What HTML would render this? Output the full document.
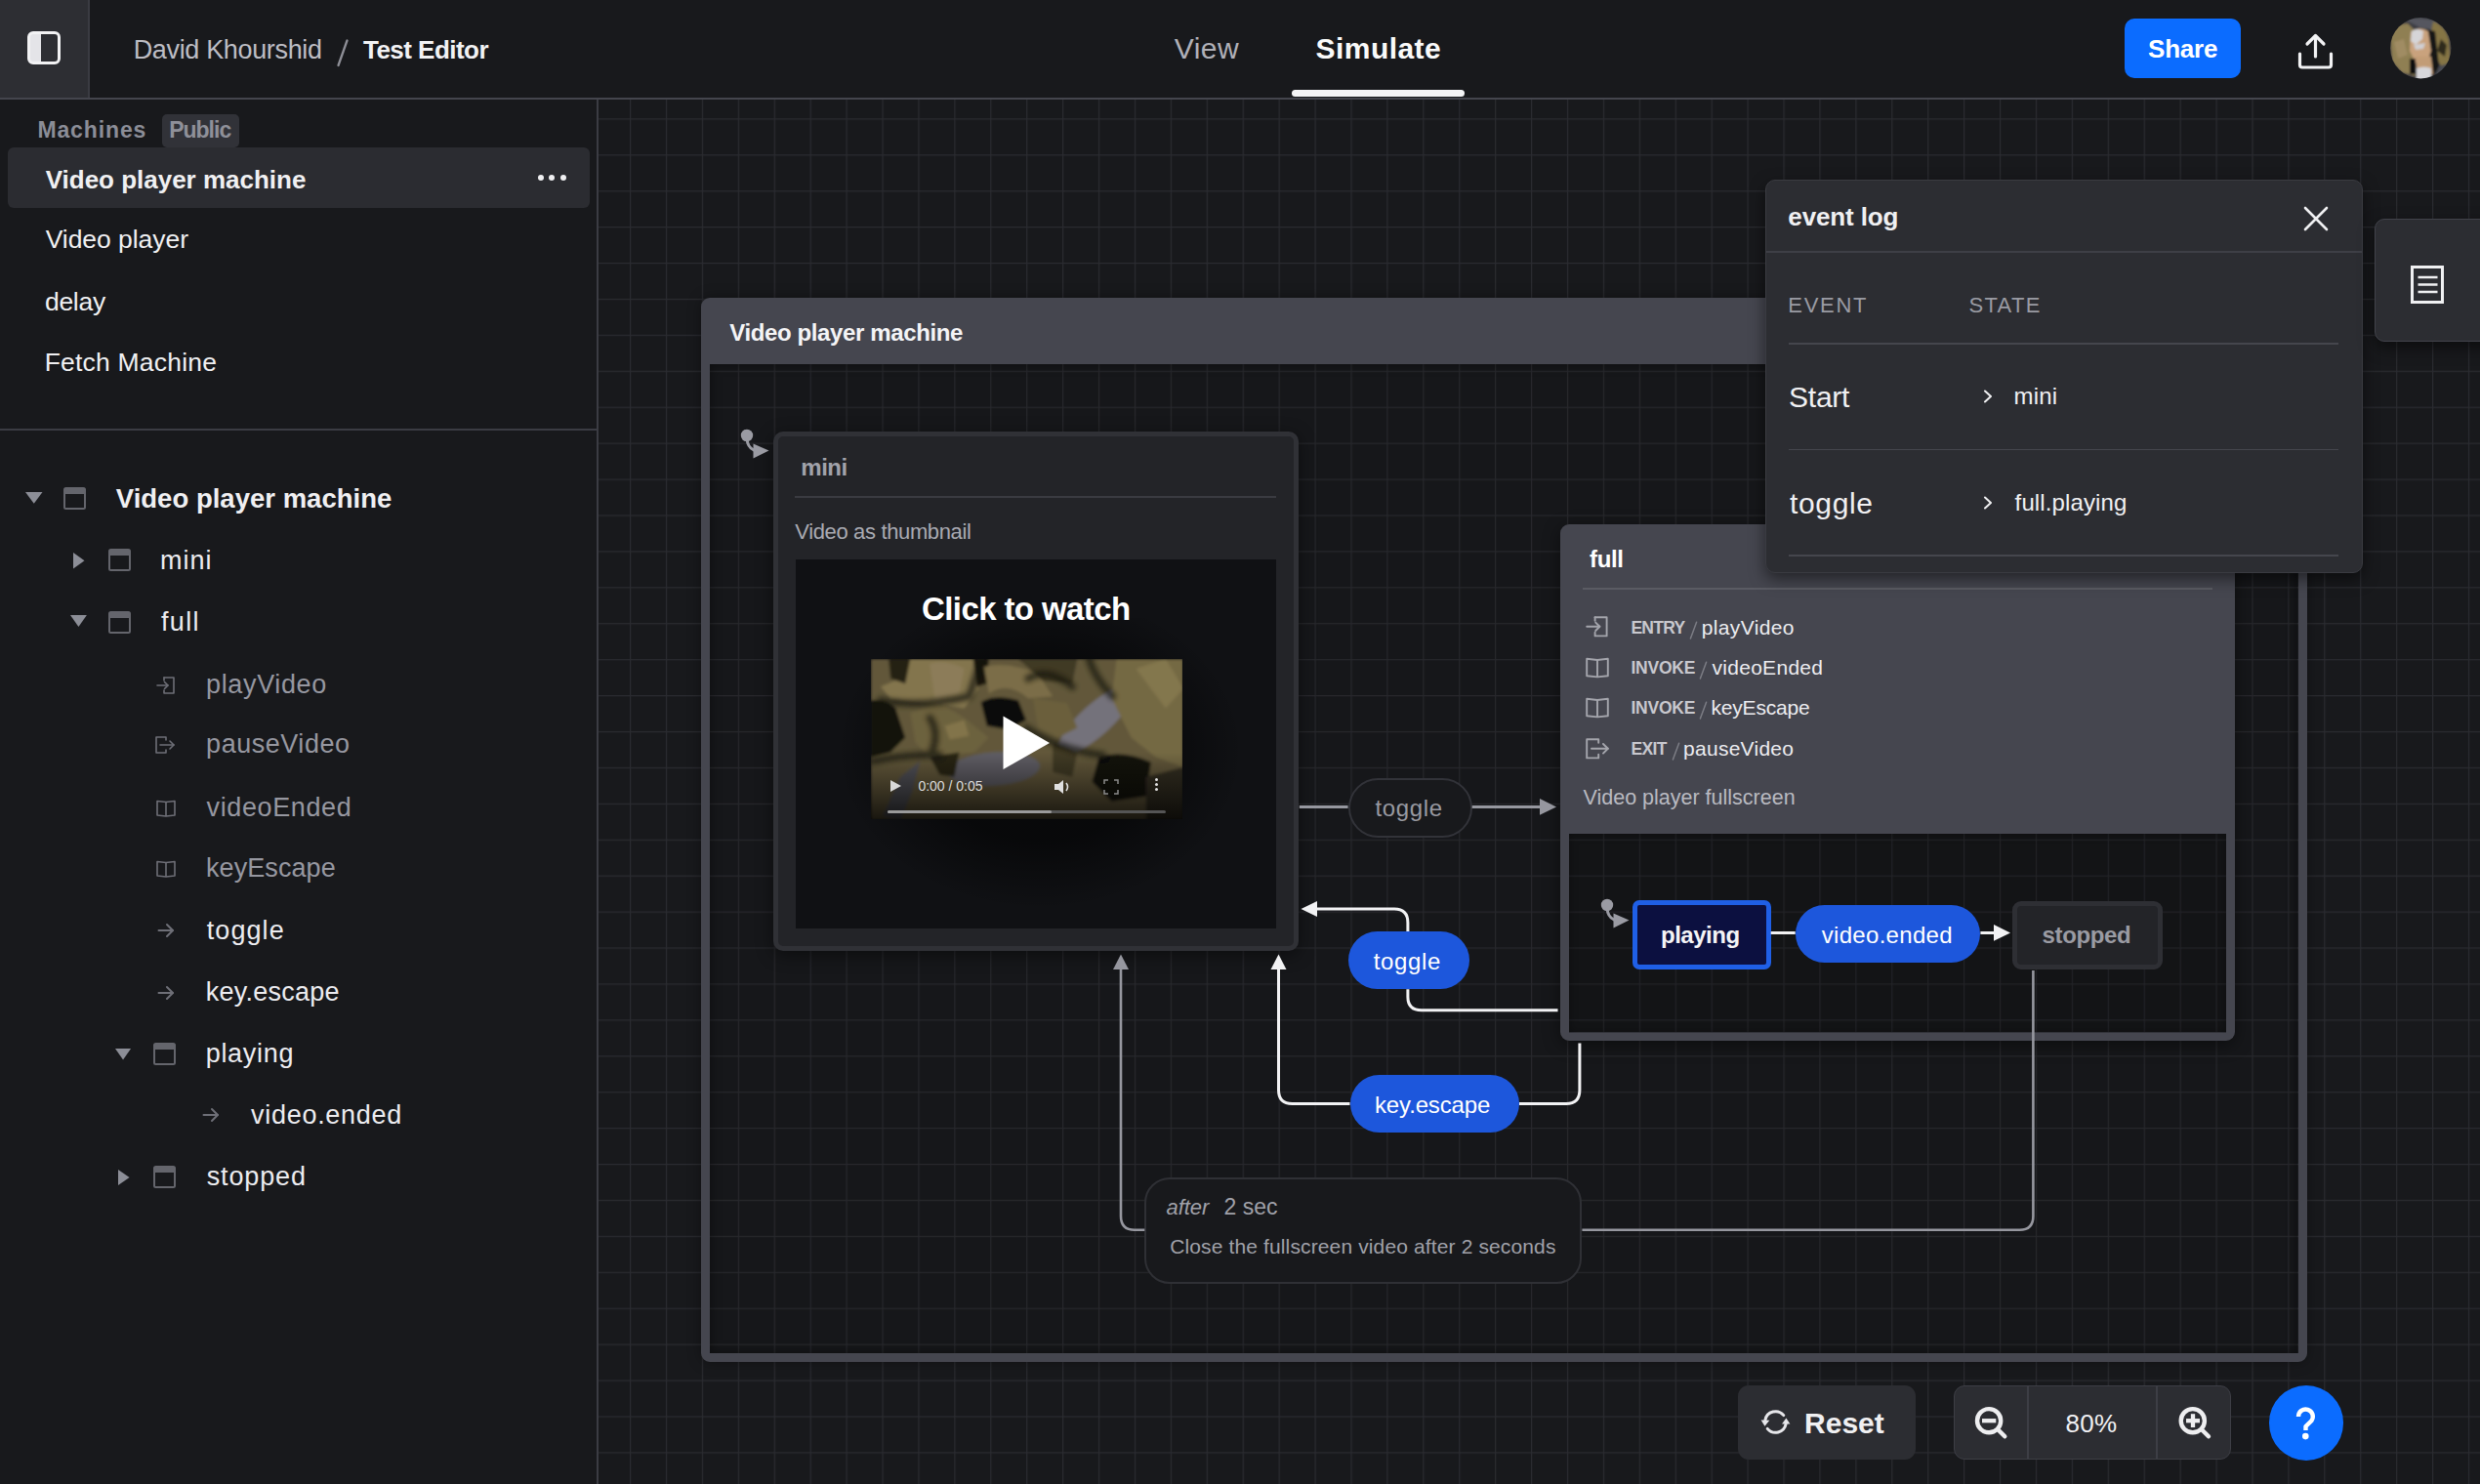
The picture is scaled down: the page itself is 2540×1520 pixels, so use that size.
<!DOCTYPE html>
<html><head><meta charset="utf-8">
<style>
*{box-sizing:border-box;margin:0;padding:0}
html,body{width:2540px;height:1520px;overflow:hidden;background:#18191c;font-family:"Liberation Sans",sans-serif;color:#f0f0f2;position:relative}
.a{position:absolute;white-space:nowrap;line-height:1}
svg{position:absolute;overflow:visible}
</style></head>
<body>
<svg width="2540" height="1520" style="position:absolute;left:0;top:0">
<defs><pattern id="g" patternUnits="userSpaceOnUse" x="645" y="121.3" width="36.92" height="36.92">
<rect x="0" y="0" width="1.2" height="36.92" fill="#2a2b30"/><rect x="0" y="0" width="36.92" height="1.2" fill="#2a2b30"/></pattern></defs>
<rect x="613" y="102" width="1927" height="1418" fill="url(#g)"/>
</svg>
<div class="a" style="left:0;top:0;width:2540px;height:100px;background:#18191c"></div>
<div class="a" style="left:0;top:100px;width:2540px;height:2px;background:#44454d"></div>
<div class="a" style="left:0;top:0;width:92px;height:100px;background:#2d2e33;border-right:2px solid #3a3b42"></div>
<div class="a" style="left:28px;top:32.3px;width:34px;height:34px;border:3.3px solid #f2f2f4;border-radius:6px;background:linear-gradient(90deg,#e4e4e8 0 10.6px,transparent 10.6px)"></div>
<div class="a" style="left:136.70px;top:37.70px;font-size:27px;font-weight:normal;font-style:normal;color:#bdbdc4;letter-spacing:-0.342px;">David Khourshid</div>
<svg width="20" height="40" style="left:340px;top:35px"><path d="M15.5 6.5 L6.5 32" stroke="#8e8f97" stroke-width="2.3" stroke-linecap="round"/></svg>
<div class="a" style="left:372.00px;top:38.20px;font-size:26px;font-weight:bold;font-style:normal;color:#f2f2f4;letter-spacing:-0.534px;">Test Editor</div>
<div class="a" style="left:1202.80px;top:35.00px;font-size:30px;font-weight:normal;font-style:normal;color:#b0b0b8;letter-spacing:0.461px;">View</div>
<div class="a" style="left:1347.60px;top:35.00px;font-size:30px;font-weight:bold;font-style:normal;color:#fafafa;letter-spacing:0.435px;">Simulate</div>
<div class="a" style="left:1323px;top:92px;width:177px;height:7px;border-radius:4px;background:#f4f4f6"></div>
<div class="a" style="left:2176px;top:19px;width:119px;height:61px;border-radius:10px;background:#0b6cff"></div>
<div class="a" style="left:2200.00px;top:37.40px;font-size:26px;font-weight:bold;font-style:normal;color:#ffffff;letter-spacing:-0.200px;">Share</div>
<svg width="40" height="40" style="left:2352px;top:33px"><g fill="none" stroke="#f2f2f4" stroke-width="3.2" stroke-linecap="round" stroke-linejoin="round">
<path d="M19.5 4 V25"/><path d="M11 12 L19.5 3.5 L28 12"/><path d="M3.5 22 V33.5 Q3.5 36 6 36 H33 Q35.5 36 35.5 33.5 V22"/></g></svg>
<svg width="63" height="63" style="left:2447.7px;top:18.2px"><defs><clipPath id="avc"><circle cx="31.25" cy="31.25" r="31.2"/></clipPath><filter id="avb"><feGaussianBlur stdDeviation="0.9"/></filter></defs>
<g clip-path="url(#avc)"><g filter="url(#avb)">
<rect x="-2" y="-2" width="67" height="67" fill="#3a3b42"/>
<path d="M15 2 Q30 -2 48 4 L50 14 L30 10 Z" fill="#55565e"/>
<path d="M0 18 Q6 6 18 6 L26 14 L24 40 L26 60 L12 56 L2 45 Z" fill="#8f7f52"/>
<path d="M4 25 L14 22 L18 38 L8 42 Z" fill="#a08c63"/>
<path d="M44 4 Q56 8 60 22 L62 48 L54 52 L46 40 L42 14 Z" fill="#857545"/>
<path d="M52 22 L58 28 L56 40 L48 34 Z" fill="#2e2a1c"/>
<path d="M36 12 L46 14 L50 50 L44 60 L38 48 Z" fill="#121213"/>
<path d="M21 15 Q30 8 39 14 L42 34 L38 46 L26 46 L20 34 Z" fill="#c9a27d"/>
<path d="M22 14 Q28 10 34 14 L33 22 L26 28 L21 24 Z" fill="#d6d5d8"/>
<path d="M24 28 L36 26 L34 32 L26 33 Z" fill="#d0cfd2"/>
<path d="M26 40 L42 40 L44 58 L28 60 Z" fill="#c29c76"/>
<path d="M20 42 L26 42 L26 58 L20 58 Z" fill="#0e0e10"/>
<path d="M27 52 Q35 49 42 52 L42 64 L27 64 Z" fill="#d8d8dc"/>
<path d="M50 50 L62 46 L62 64 L46 64 Z" fill="#4a4b53"/>
</g></g></svg>
<div class="a" style="left:611px;top:102px;width:2px;height:1418px;background:#3b3c43"></div>
<div class="a" style="left:38.40px;top:122.40px;font-size:23px;font-weight:bold;font-style:normal;color:#8b8d97;letter-spacing:0.883px;">Machines</div>
<div class="a" style="left:166px;top:116.5px;width:79px;height:34px;border-radius:5px;background:#313238"></div>
<div class="a" style="left:173.20px;top:122.40px;font-size:23px;font-weight:bold;font-style:normal;color:#8f9099;letter-spacing:-1.004px;">Public</div>
<div class="a" style="left:8px;top:151.4px;width:596px;height:61.2px;border-radius:6px;background:#2b2c31"></div>
<div class="a" style="left:46.70px;top:170.60px;font-size:26px;font-weight:bold;font-style:normal;color:#f0f0f2;letter-spacing:-0.010px;">Video player machine</div>
<div class="a" style="left:550.5px;top:178.5px;width:6px;height:6px;border-radius:50%;background:#f0f0f2"></div>
<div class="a" style="left:562px;top:178.5px;width:6px;height:6px;border-radius:50%;background:#f0f0f2"></div>
<div class="a" style="left:573.5px;top:178.5px;width:6px;height:6px;border-radius:50%;background:#f0f0f2"></div>
<div class="a" style="left:46.70px;top:231.95px;font-size:26.5px;font-weight:normal;font-style:normal;color:#f0f0f2;letter-spacing:-0.047px;">Video player</div>
<div class="a" style="left:45.90px;top:295.75px;font-size:26.5px;font-weight:normal;font-style:normal;color:#f0f0f2;letter-spacing:-0.250px;">delay</div>
<div class="a" style="left:45.70px;top:357.55px;font-size:26.5px;font-weight:normal;font-style:normal;color:#f0f0f2;letter-spacing:0.203px;">Fetch Machine</div>
<div class="a" style="left:0;top:439px;width:611px;height:2px;background:#3b3c43"></div>
<svg width="19.500000000000004" height="13.800000000000068" style="left:25.7px;top:503.9px"><path d="M0 0 H17.500000000000004 L8.750000000000002 11.800000000000068 Z" fill="#8c8e97"/></svg>
<div class="a" style="left:65.2px;top:498.8px;width:23px;height:23px;border:2.5px solid #64656c;border-top-width:7px;border-radius:2.5px"></div>
<div class="a" style="left:118.80px;top:496.75px;font-size:27.5px;font-weight:bold;font-style:normal;color:#f0f0f2;letter-spacing:0.013px;">Video player machine</div>
<svg width="13.5" height="18.399999999999977" style="left:74.5px;top:565.7px"><path d="M0 0 L11.5 8.199999999999989 L0 16.399999999999977 Z" fill="#8c8e97"/></svg>
<div class="a" style="left:111.4px;top:562.3px;width:23px;height:23px;border:2.5px solid #64656c;border-top-width:7px;border-radius:2.5px"></div>
<div class="a" style="left:164.10px;top:560.60px;font-size:27px;font-weight:normal;font-style:normal;color:#ececf0;letter-spacing:0.965px;">mini</div>
<svg width="18.900000000000006" height="13.899999999999977" style="left:72px;top:630px"><path d="M0 0 H16.900000000000006 L8.450000000000003 11.899999999999977 Z" fill="#8c8e97"/></svg>
<div class="a" style="left:111.4px;top:625.5px;width:23px;height:23px;border:2.5px solid #64656c;border-top-width:7px;border-radius:2.5px"></div>
<div class="a" style="left:165.10px;top:623.60px;font-size:27px;font-weight:normal;font-style:normal;color:#ececf0;letter-spacing:1.261px;">full</div>
<svg width="20" height="18" viewBox="0 0 20 18" style="left:159.5px;top:692.5px"><g fill="none" stroke="#6e6f77" stroke-width="1.6" stroke-linejoin="round" stroke-linecap="round"><path d="M8 1 H18 V17 H8 V14"/><path d="M8 4 V1"/><path d="M1 9 H12"/><path d="M8.5 5.5 L12 9 L8.5 12.5"/></g></svg>
<div class="a" style="left:211.10px;top:687.60px;font-size:27px;font-weight:normal;font-style:normal;color:#9697a0;letter-spacing:0.627px;">playVideo</div>
<svg width="20" height="18" viewBox="0 0 20 18" style="left:158.5px;top:754px"><g fill="none" stroke="#6e6f77" stroke-width="1.6" stroke-linejoin="round" stroke-linecap="round"><path d="M11 4 V1 H1 V17 H11 V14"/><path d="M5 9 H19"/><path d="M15 5 L19 9 L15 13"/></g></svg>
<div class="a" style="left:211.10px;top:749.40px;font-size:27px;font-weight:normal;font-style:normal;color:#9697a0;letter-spacing:0.532px;">pauseVideo</div>
<svg width="20" height="18" viewBox="0 0 20 18" style="left:159.5px;top:818.5px"><g fill="none" stroke="#6e6f77" stroke-width="1.6" stroke-linejoin="round"><path d="M1 1.5 L10 2.5 L19 1.5 V16 L10 17 L1 16 Z"/><path d="M10 2.5 V17"/></g></svg>
<div class="a" style="left:211.60px;top:813.50px;font-size:27px;font-weight:normal;font-style:normal;color:#9697a0;letter-spacing:0.611px;">videoEnded</div>
<svg width="20" height="18" viewBox="0 0 20 18" style="left:159.5px;top:881px"><g fill="none" stroke="#6e6f77" stroke-width="1.6" stroke-linejoin="round"><path d="M1 1.5 L10 2.5 L19 1.5 V16 L10 17 L1 16 Z"/><path d="M10 2.5 V17"/></g></svg>
<div class="a" style="left:211.00px;top:876.10px;font-size:27px;font-weight:normal;font-style:normal;color:#9697a0;letter-spacing:0.080px;">keyEscape</div>
<svg width="20" height="16" style="left:161px;top:945.4px"><g fill="none" stroke="#6e6f77" stroke-width="2" stroke-linecap="round" stroke-linejoin="round"><path d="M1.5 8 H16"/><path d="M10 2 L16 8 L10 14"/></g></svg>
<div class="a" style="left:211.70px;top:940.30px;font-size:27px;font-weight:normal;font-style:normal;color:#ececf0;letter-spacing:1.090px;">toggle</div>
<svg width="20" height="16" style="left:161px;top:1008.5px"><g fill="none" stroke="#6e6f77" stroke-width="2" stroke-linecap="round" stroke-linejoin="round"><path d="M1.5 8 H16"/><path d="M10 2 L16 8 L10 14"/></g></svg>
<div class="a" style="left:210.70px;top:1003.00px;font-size:27px;font-weight:normal;font-style:normal;color:#ececf0;letter-spacing:0.249px;">key.escape</div>
<svg width="18.099999999999994" height="13.5" style="left:118.4px;top:1073.5px"><path d="M0 0 H16.099999999999994 L8.049999999999997 11.5 Z" fill="#8c8e97"/></svg>
<div class="a" style="left:157px;top:1068px;width:23px;height:23px;border:2.5px solid #64656c;border-top-width:7px;border-radius:2.5px"></div>
<div class="a" style="left:210.70px;top:1065.70px;font-size:27px;font-weight:normal;font-style:normal;color:#ececf0;letter-spacing:0.709px;">playing</div>
<svg width="20" height="16" style="left:207px;top:1134.2px"><g fill="none" stroke="#6e6f77" stroke-width="2" stroke-linecap="round" stroke-linejoin="round"><path d="M1.5 8 H16"/><path d="M10 2 L16 8 L10 14"/></g></svg>
<div class="a" style="left:257.10px;top:1128.90px;font-size:27px;font-weight:normal;font-style:normal;color:#ececf0;letter-spacing:0.699px;">video.ended</div>
<svg width="13.600000000000009" height="17.90000000000009" style="left:120.7px;top:1197.5px"><path d="M0 0 L11.600000000000009 7.9500000000000455 L0 15.900000000000091 Z" fill="#8c8e97"/></svg>
<div class="a" style="left:157px;top:1194px;width:23px;height:23px;border:2.5px solid #64656c;border-top-width:7px;border-radius:2.5px"></div>
<div class="a" style="left:211.70px;top:1192.00px;font-size:27px;font-weight:normal;font-style:normal;color:#ececf0;letter-spacing:0.872px;">stopped</div>
<div class="a" style="left:717.5px;top:305px;width:1645px;height:1089.7px;border:9.5px solid #45464f;border-top-width:68px;border-radius:9px;box-shadow:0 0 14px rgba(0,0,0,.35)"></div>
<div class="a" style="left:727px;top:373px;width:1626px;height:1012.7px;background:rgba(0,0,0,.07);box-shadow:inset 0 0 12px rgba(0,0,0,.45)"></div>
<div class="a" style="left:747.20px;top:329.40px;font-size:24px;font-weight:bold;font-style:normal;color:#f4f4f6;letter-spacing:-0.378px;">Video player machine</div>
<div class="a" style="left:791.6px;top:442.3px;width:538.2px;height:531.4px;background:#232428;border:5px solid #303136;border-radius:10px;box-shadow:0 4px 18px rgba(0,0,0,.45)"></div>
<div class="a" style="left:820.30px;top:466.90px;font-size:24px;font-weight:bold;font-style:normal;color:#a1a2aa;letter-spacing:-0.489px;">mini</div>
<div class="a" style="left:814.3px;top:508px;width:492.7px;height:2px;background:#3a3b41"></div>
<div class="a" style="left:814.30px;top:534.20px;font-size:22px;font-weight:normal;font-style:normal;color:#a9aab2;letter-spacing:-0.361px;">Video as thumbnail</div>
<div class="a" style="left:814.8px;top:573px;width:491.8px;height:377.5px;background:#101114;overflow:hidden"><div class="a" style="left:40px;top:60px;width:420px;height:300px;background:radial-gradient(ellipse at 50% 45%,rgba(0,0,0,.5) 0 40%,transparent 70%)"></div></div>
<div class="a" style="left:944.00px;top:607.30px;font-size:33px;font-weight:bold;font-style:normal;color:#ffffff;letter-spacing:-0.594px;">Click to watch</div>
<div class="a" style="left:892.4px;top:675.3px;width:318.4px;height:164.2px;overflow:hidden;background:#101114">
<svg width="320" height="165" viewBox="0 0 318 164" preserveAspectRatio="none" style="left:0;top:0"><defs><filter id="bl" x="-10%" y="-10%" width="120%" height="120%"><feGaussianBlur stdDeviation="1.6"/></filter><filter id="bl2" x="-10%" y="-10%" width="120%" height="120%"><feGaussianBlur stdDeviation="2.2"/></filter>
<linearGradient id="fd" x1="0" y1="0" x2="0" y2="1"><stop offset="0" stop-color="#000" stop-opacity="0"/><stop offset="1" stop-color="#000" stop-opacity=".75"/></linearGradient></defs>
<g filter="url(#bl)">
<rect x="0" y="0" width="318" height="164" fill="#6f6442"/>
<path d="M40 0 H105 L110 30 L95 50 L60 45 L20 40 L10 28 L30 20 Z" fill="#968659"/>
<path d="M60 5 Q75 0 95 10 L90 35 L65 40 Z" fill="#a08e66"/>
<path d="M0 42 Q15 40 25 50 L35 80 L20 95 L0 100 Z" fill="#18170f"/>
<path d="M18 0 H40 L35 25 L20 20 Z" fill="#2a2616"/>
<path d="M104 0 H120 L118 25 L108 28 Z" fill="#1c1a10"/>
<path d="M112 44 Q125 35 150 42 L158 62 L140 72 L118 68 Z" fill="#0f0f0c"/>
<path d="M115 8 Q140 2 170 15 L185 38 L160 40 Q140 22 120 35 Z" fill="#8d7d52"/>
<path d="M150 0 H210 L205 25 L175 22 Z" fill="#4a4229"/>
<path d="M40 55 L70 45 L95 60 L120 80 L105 95 L60 100 L45 85 Z" fill="#7c6f46"/>
<path d="M75 68 L95 62 L100 78 L80 82 Z" fill="#948454"/>
<ellipse cx="125" cy="112" rx="47" ry="17" transform="rotate(-4 125 112)" fill="#6d6b72"/>
<path d="M12 160 L30 120 L50 104 L42 135 L30 164 Z" fill="#5c5b62"/>
<ellipse cx="229" cy="62" rx="50" ry="16" transform="rotate(-42 229 62)" fill="#85828c"/>
<path d="M250 0 H318 V110 L290 100 L265 80 L245 40 Z" fill="#85784d"/>
<path d="M270 10 L300 0 L318 30 L300 50 Z" fill="#968859"/>
<path d="M232 100 Q255 92 285 105 L280 140 L245 145 L225 125 Z" fill="#121210"/>
<path d="M60 100 L90 95 L85 120 L70 118 Z" fill="#2d2919"/>
<path d="M185 85 L210 95 L205 120 L185 115 Z" fill="#4a4229"/>
<path d="M280 120 L318 110 V164 H280 Z" fill="#3a3425"/>
<path d="M165 40 L200 45 L210 70 L190 80 L170 70 Z" fill="#7a6d45"/>
<g fill="none" stroke="#15140e" stroke-width="7" stroke-linecap="round" opacity=".7" filter="url(#bl2)">
<path d="M10 42 Q50 50 100 38 L112 2"/><path d="M158 70 Q190 92 236 98"/><path d="M2 104 Q40 96 70 98"/><path d="M160 20 Q180 8 205 28"/><path d="M222 0 Q228 20 246 38"/><path d="M60 60 Q70 75 62 95"/>
</g>
</g>
<rect x="0" y="0" width="318" height="164" fill="#000" opacity=".12"/><rect x="0" y="95" width="318" height="69" fill="url(#fd)"/>
</svg>
<svg width="60" height="60" style="left:135px;top:58px"><path d="M0.5 0.5 L48 28 L0.5 55 Z" fill="#ffffff"/></svg>
<svg width="14" height="14" style="left:19px;top:123px"><path d="M1 1 L12 7 L1 13 Z" fill="#d8d8d8"/></svg>
<div class="a" style="left:48px;top:123px;font-size:14px;color:#dcdcdc;line-height:1">0:00 / 0:05</div>
<svg width="20" height="16" style="left:187px;top:123px"><path d="M1 5 H5 L10 1 V15 L5 11 H1 Z" fill="#e0e0e0"/><path d="M13 4 Q16 8 13 12" stroke="#e0e0e0" stroke-width="1.6" fill="none"/></svg>
<svg width="16" height="16" style="left:238px;top:123px"><g stroke="#8a8a8a" stroke-width="1.5" fill="none"><path d="M1 5 V1 H5 M11 1 H15 V5 M15 11 V15 H11 M5 15 H1 V11"/></g></svg>
<div class="a" style="left:291px;top:122px;width:3px;height:3px;border-radius:50%;background:#e0e0e0;box-shadow:0 5px 0 #e0e0e0,0 10px 0 #e0e0e0"></div>
<div class="a" style="left:17px;top:155px;width:285px;height:3px;border-radius:2px;background:#555"></div>
<div class="a" style="left:17px;top:155px;width:168px;height:3px;border-radius:2px;background:#9a9a9a"></div>
</div>
<div class="a" style="left:1598px;top:536.6px;width:690.5px;height:529.7px;border:9px solid #45464f;border-top-width:317px;border-radius:9px;box-shadow:0 4px 18px rgba(0,0,0,.45)"></div>
<div class="a" style="left:1607px;top:853.6px;width:672.5px;height:204px;background:rgba(0,0,0,.12);box-shadow:inset 0 0 10px rgba(0,0,0,.35)"></div>
<div class="a" style="left:1628.10px;top:560.60px;font-size:24px;font-weight:bold;font-style:normal;color:#ffffff;letter-spacing:-0.373px;">full</div>
<div class="a" style="left:1621px;top:602px;width:644.6px;height:1.6px;background:#5a5b63"></div>
<svg width="24.0" height="21.599999999999998" viewBox="0 0 20 18" style="left:1624px;top:631px"><g fill="none" stroke="#a4a5ac" stroke-width="1.6" stroke-linejoin="round" stroke-linecap="round"><path d="M8 1 H18 V17 H8 V14"/><path d="M8 4 V1"/><path d="M1 9 H12"/><path d="M8.5 5.5 L12 9 L8.5 12.5"/></g></svg>
<div class="a" style="left:1670.40px;top:635.05px;font-size:17.5px;font-weight:bold;font-style:normal;color:#c8c8ce;letter-spacing:-0.697px;">ENTRY</div>
<svg width="12" height="24" style="left:1730.4px;top:635.8px"><path d="M7.6 1.2 L1.4 18" stroke="#7c7d85" stroke-width="1.5" stroke-linecap="round"/></svg>
<div class="a" style="left:1742.80px;top:631.80px;font-size:21px;font-weight:normal;font-style:normal;color:#ececf0;letter-spacing:0.341px;">playVideo</div>
<svg width="24.0" height="21.599999999999998" viewBox="0 0 20 18" style="left:1624px;top:672.5px"><g fill="none" stroke="#a4a5ac" stroke-width="1.6" stroke-linejoin="round"><path d="M1 1.5 L10 2.5 L19 1.5 V16 L10 17 L1 16 Z"/><path d="M10 2.5 V17"/></g></svg>
<div class="a" style="left:1670.40px;top:675.95px;font-size:17.5px;font-weight:bold;font-style:normal;color:#c8c8ce;letter-spacing:-0.224px;">INVOKE</div>
<svg width="12" height="24" style="left:1740.0px;top:676.6999999999999px"><path d="M7.6 1.2 L1.4 18" stroke="#7c7d85" stroke-width="1.5" stroke-linecap="round"/></svg>
<div class="a" style="left:1753.50px;top:672.70px;font-size:21px;font-weight:normal;font-style:normal;color:#ececf0;letter-spacing:0.284px;">videoEnded</div>
<svg width="24.0" height="21.599999999999998" viewBox="0 0 20 18" style="left:1624px;top:714px"><g fill="none" stroke="#a4a5ac" stroke-width="1.6" stroke-linejoin="round"><path d="M1 1.5 L10 2.5 L19 1.5 V16 L10 17 L1 16 Z"/><path d="M10 2.5 V17"/></g></svg>
<div class="a" style="left:1670.40px;top:717.15px;font-size:17.5px;font-weight:bold;font-style:normal;color:#c8c8ce;letter-spacing:-0.224px;">INVOKE</div>
<svg width="12" height="24" style="left:1740.0px;top:717.9px"><path d="M7.6 1.2 L1.4 18" stroke="#7c7d85" stroke-width="1.5" stroke-linecap="round"/></svg>
<div class="a" style="left:1752.50px;top:713.90px;font-size:21px;font-weight:normal;font-style:normal;color:#ececf0;letter-spacing:-0.193px;">keyEscape</div>
<svg width="24.0" height="21.599999999999998" viewBox="0 0 20 18" style="left:1623.5px;top:756px"><g fill="none" stroke="#a4a5ac" stroke-width="1.6" stroke-linejoin="round" stroke-linecap="round"><path d="M11 4 V1 H1 V17 H11 V14"/><path d="M5 9 H19"/><path d="M15 5 L19 9 L15 13"/></g></svg>
<div class="a" style="left:1670.40px;top:759.25px;font-size:17.5px;font-weight:bold;font-style:normal;color:#c8c8ce;letter-spacing:-0.602px;">EXIT</div>
<svg width="12" height="24" style="left:1712.2px;top:760.0px"><path d="M7.6 1.2 L1.4 18" stroke="#7c7d85" stroke-width="1.5" stroke-linecap="round"/></svg>
<div class="a" style="left:1724.10px;top:756.00px;font-size:21px;font-weight:normal;font-style:normal;color:#ececf0;letter-spacing:0.259px;">pauseVideo</div>
<div class="a" style="left:1621.50px;top:807.25px;font-size:21.5px;font-weight:normal;font-style:normal;color:#b9bac1;letter-spacing:0.000px;">Video player fullscreen</div>
<div class="a" style="left:1672.3px;top:922px;width:141.4px;height:70.8px;background:#0c1040;border:5px solid #1f5fe6;border-radius:7px"></div>
<div class="a" style="left:1701.00px;top:946.00px;font-size:24px;font-weight:bold;font-style:normal;color:#f4f4f6;letter-spacing:-0.492px;">playing</div>
<div class="a" style="left:1838.7px;top:927px;width:189.7px;height:58.8px;background:#1d57dc;border-radius:30px"></div>
<div class="a" style="left:1865.80px;top:945.50px;font-size:24px;font-weight:normal;font-style:normal;color:#ffffff;letter-spacing:0.297px;">video.ended</div>
<div class="a" style="left:2061.4px;top:922.6px;width:153.3px;height:70.2px;background:#232428;border:5px solid #2e2f34;border-radius:9px"></div>
<div class="a" style="left:2091.60px;top:946.00px;font-size:24px;font-weight:bold;font-style:normal;color:#9a9ba3;letter-spacing:-0.378px;">stopped</div>
<div class="a" style="left:1380.6px;top:796.5px;width:127.1px;height:61.2px;background:#18191c;border:2px solid #323339;border-radius:31px"></div>
<div class="a" style="left:1408.40px;top:815.60px;font-size:24px;font-weight:normal;font-style:normal;color:#9899a1;letter-spacing:0.671px;">toggle</div>
<div class="a" style="left:1380.7px;top:953.9px;width:124px;height:59.3px;background:#1d57dc;border-radius:30px"></div>
<div class="a" style="left:1406.80px;top:972.50px;font-size:24px;font-weight:normal;font-style:normal;color:#ffffff;letter-spacing:0.631px;">toggle</div>
<div class="a" style="left:1382.5px;top:1101.4px;width:173.5px;height:58.2px;background:#1d57dc;border-radius:30px"></div>
<div class="a" style="left:1408.00px;top:1119.50px;font-size:24px;font-weight:normal;font-style:normal;color:#ffffff;letter-spacing:-0.142px;">key.escape</div>
<div class="a" style="left:1172.3px;top:1205.6px;width:448.1px;height:109.7px;background:#18191c;border:2px solid #2f3035;border-radius:26px"></div>
<div class="a" style="left:1194.40px;top:1225.60px;font-size:22px;font-weight:normal;font-style:italic;color:#a0a1a9;letter-spacing:0.000px;">after</div>
<div class="a" style="left:1253.50px;top:1224.60px;font-size:23px;font-weight:normal;font-style:normal;color:#a0a1a9;letter-spacing:0.000px;">2 sec</div>
<div class="a" style="left:1198.20px;top:1266.30px;font-size:21px;font-weight:normal;font-style:normal;color:#a0a1a9;letter-spacing:0.130px;">Close the fullscreen video after 2 seconds</div>
<svg width="2540" height="1520" style="left:0;top:0">
<g fill="none" stroke-width="3" stroke-linejoin="round">
<path d="M1330.8 826.4 H1380.6 M1507.7 826.4 H1580" stroke="#96979f"/>
<path d="M1441.9 953.9 V945 Q1441.9 931 1428 931 H1346" stroke="#f2f2f4"/>
<path d="M1441.9 1013.2 V1021 Q1441.9 1034.8 1456 1034.8 H1595.5" stroke="#f2f2f4"/>
<path d="M1617.9 1068.5 V1116.5 Q1617.9 1130.5 1604 1130.5 H1556 M1382.5 1130.5 H1323.5 Q1309.5 1130.5 1309.5 1116.5 V990" stroke="#f2f2f4"/>
<path d="M2082.4 994 V1245.8 Q2082.4 1259.8 2068.4 1259.8 H1620.4 M1172.3 1259.8 H1162 Q1148 1259.8 1148 1245.8 V990" stroke="#96979f" stroke-width="2.6"/>
<path d="M1813.7 955.4 H1838.7 M2028.4 955.4 H2045" stroke="#f2f2f4"/>
</g>
<path d="M1594 826.4 L1577 818 V834.8 Z" fill="#96979f"/>
<path d="M1332.5 931 L1349 923 V939 Z" fill="#f2f2f4"/>
<path d="M1309.5 977.5 L1301.5 993 H1317.5 Z" fill="#f2f2f4"/>
<path d="M1148 977.5 L1140 993 H1156 Z" fill="#96979f"/>
<path d="M2059 955.4 L2042 947 V963.8 Z" fill="#f2f2f4"/>
</svg>
<svg width="40" height="40" style="left:757px;top:438px"><circle cx="8" cy="8" r="6.2" fill="#9a9ba3"/><path d="M8 11 Q8.5 20 15 23" stroke="#9a9ba3" stroke-width="3" fill="none" stroke-linecap="round"/><path d="M14.5 16.5 L30.5 23.5 L14.5 31.5 Z" fill="#9a9ba3"/></svg>
<svg width="40" height="40" style="left:1638px;top:918.5px"><circle cx="8" cy="8" r="6.2" fill="#9a9ba3"/><path d="M8 11 Q8.5 20 15 23" stroke="#9a9ba3" stroke-width="3" fill="none" stroke-linecap="round"/><path d="M14.5 16.5 L30.5 23.5 L14.5 31.5 Z" fill="#9a9ba3"/></svg>
<div class="a" style="left:1808px;top:183.6px;width:612px;height:403px;background:#2c2d32;border:1.5px solid #3a3b41;border-radius:10px;box-shadow:0 6px 16px rgba(0,0,0,.5)"></div>
<div class="a" style="left:1831.30px;top:209.40px;font-size:26px;font-weight:bold;font-style:normal;color:#f0f0f2;letter-spacing:-0.119px;">event log</div>
<svg width="30" height="30" style="left:2358px;top:210px"><g stroke="#f0f0f2" stroke-width="2.6" stroke-linecap="round"><path d="M3 3 L25 25 M25 3 L3 25"/></g></svg>
<div class="a" style="left:1809px;top:257px;width:610px;height:1.6px;background:#3e3f46"></div>
<div class="a" style="left:1831.30px;top:301.80px;font-size:22px;font-weight:normal;font-style:normal;color:#9a9ba3;letter-spacing:1.698px;">EVENT</div>
<div class="a" style="left:2016.40px;top:301.80px;font-size:22px;font-weight:normal;font-style:normal;color:#9a9ba3;letter-spacing:1.360px;">STATE</div>
<div class="a" style="left:1832.3px;top:350.6px;width:562.5px;height:2px;background:#45464d"></div>
<div class="a" style="left:1832.00px;top:391.70px;font-size:30px;font-weight:normal;font-style:normal;color:#f0f0f2;letter-spacing:-0.230px;">Start</div>
<svg width="12" height="14" style="left:2031px;top:399px"><path d="M2 1.5 L8 7 L2 12.5" stroke="#f0f0f2" stroke-width="2" fill="none" stroke-linecap="round" stroke-linejoin="round"/></svg>
<div class="a" style="left:2062.60px;top:393.60px;font-size:24px;font-weight:normal;font-style:normal;color:#f0f0f2;letter-spacing:0.176px;">mini</div>
<div class="a" style="left:1832.3px;top:459.6px;width:562.5px;height:1.6px;background:#45464d"></div>
<div class="a" style="left:1833.00px;top:500.50px;font-size:30px;font-weight:normal;font-style:normal;color:#f0f0f2;letter-spacing:0.649px;">toggle</div>
<svg width="12" height="14" style="left:2031px;top:508px"><path d="M2 1.5 L8 7 L2 12.5" stroke="#f0f0f2" stroke-width="2" fill="none" stroke-linecap="round" stroke-linejoin="round"/></svg>
<div class="a" style="left:2063.60px;top:502.70px;font-size:24px;font-weight:normal;font-style:normal;color:#f0f0f2;letter-spacing:0.122px;">full.playing</div>
<div class="a" style="left:1832.3px;top:568.4px;width:562.5px;height:1.6px;background:#45464d"></div>
<div class="a" style="left:2431.7px;top:224.4px;width:130px;height:125.6px;background:#2c2d32;border:1.5px solid #41424a;border-radius:10px;box-shadow:0 6px 16px rgba(0,0,0,.5)"></div>
<svg width="40" height="44" style="left:2468px;top:271px"><rect x="2.5" y="2.5" width="31" height="36" fill="none" stroke="#f0f0f2" stroke-width="3"/><path d="M8.5 13 H28.5 M8.5 20.5 H28.5 M8.5 28 H28.5" stroke="#f0f0f2" stroke-width="2.6"/></svg>
<div class="a" style="left:1780px;top:1419.4px;width:181.7px;height:75.6px;background:#2c2d32;border-radius:11px"></div>
<svg width="40" height="40" style="left:1800px;top:1435px"><g fill="none" stroke="#e6e6ea" stroke-width="3" stroke-linecap="round"><path d="M26.8 14.6 A10.8 10.8 0 0 0 7.9 19.5"/><path d="M10.2 28.4 A10.8 10.8 0 0 0 29.1 23.5"/></g><path d="M3.6 19.6 L12.3 19.8 L7.5 25.8 Z" fill="#e6e6ea"/><path d="M25 23.6 L33.4 23.6 L29.4 17.6 Z" fill="#e6e6ea"/></svg>
<div class="a" style="left:1848.00px;top:1442.80px;font-size:30px;font-weight:bold;font-style:normal;color:#f0f0f2;letter-spacing:0.020px;">Reset</div>
<div class="a" style="left:2000.8px;top:1419.4px;width:283.9px;height:75.6px;background:#2c2d32;border:1.5px solid #3d3e45;border-radius:11px"></div>
<div class="a" style="left:2076px;top:1420px;width:2px;height:74px;background:#3d3e45"></div>
<div class="a" style="left:2207.5px;top:1420px;width:2px;height:74px;background:#3d3e45"></div>
<svg width="50" height="50" style="left:2015px;top:1432px"><g fill="none" stroke="#eeeef0" stroke-width="4.4"><circle cx="22.1" cy="23.2" r="12.1"/><path d="M31 32 L38.3 39.3" stroke-linecap="round"/><path d="M15 23.2 H29.3" stroke-width="4.3"/></g></svg>
<div class="a" style="left:2115.60px;top:1444.50px;font-size:26px;font-weight:normal;font-style:normal;color:#f0f0f2;letter-spacing:0.240px;">80%</div>
<svg width="50" height="50" style="left:2225px;top:1432px"><g fill="none" stroke="#eeeef0" stroke-width="4.4"><circle cx="20.8" cy="23.2" r="12.1"/><path d="M29.7 32 L37 39.3" stroke-linecap="round"/><path d="M14 23.2 H28" stroke-width="4.3"/><path d="M21 16.2 V30" stroke-width="4.3"/></g></svg>
<div class="a" style="left:2323.6px;top:1419.4px;width:76.4px;height:76.4px;border-radius:50%;background:#0b6cff"></div>
<svg width="44" height="50" style="left:2340px;top:1430px"><path d="M14 20.9 A7.4 7.4 0 1 1 27.4 25.2 L21.5 31 V35" fill="none" stroke="#ffffff" stroke-width="4.4" stroke-linejoin="round"/><circle cx="21.3" cy="41.1" r="3.3" fill="#ffffff"/></svg>
</body></html>
